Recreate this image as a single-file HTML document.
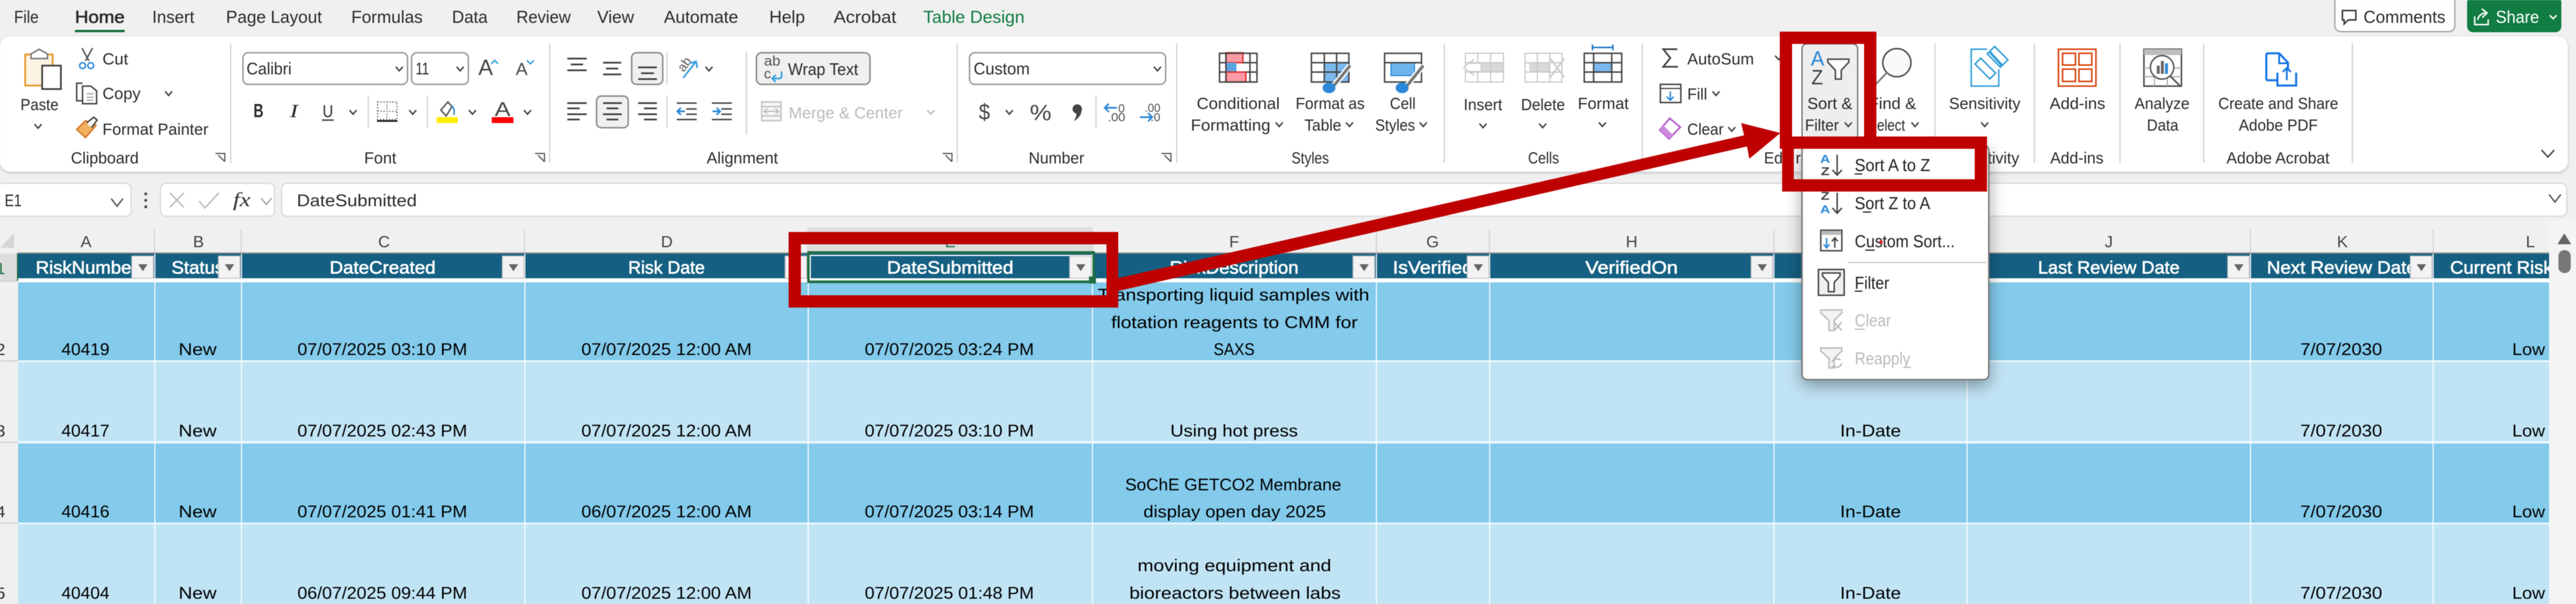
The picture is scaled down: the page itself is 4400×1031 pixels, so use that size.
<!DOCTYPE html>
<html lang="en"><head><meta charset="utf-8"><title>Excel Sort</title>
<style>
html,body{margin:0;padding:0;background:#f0f0f0;width:4400px;height:1031px;overflow:hidden}
svg{display:block;filter:blur(.6px)}
text{font-family:"Liberation Sans",sans-serif;fill:#2b2b2b;font-size:28px}
.tab{font-size:30px;fill:#2b2b2b}
.d{font-size:29px;fill:#000}
.h{font-size:31px;fill:#fff;stroke:#fff;stroke-width:.8px}
.c{font-size:28px;fill:#444;text-anchor:middle}
.g{fill:#bbb}
.m{font-size:30px;fill:#222}
.l{stroke:#444;stroke-width:3;fill:none}
.b{stroke:#2b88d8;stroke-width:3;fill:none}
.n{fill:none;stroke:#444;stroke-width:2.5}
.s{stroke:#c8c8c8;stroke-width:2;fill:none}
</style></head><body>
<svg xmlns="http://www.w3.org/2000/svg" width="4400" height="1031" viewBox="0 0 4400 1031">
<defs>
<path id="ch" d="M-6-4 0 3 6-4" fill="none" stroke="#444" stroke-width="2.5"/>
<path id="chg" d="M-6-4 0 3 6-4" fill="none" stroke="#bbb" stroke-width="2.5"/>
<path id="chb" d="M-10-6 0 7 10-6" fill="none" stroke="#555" stroke-width="2.5"/>
<g id="fb"><rect x="0" y="0" width="37" height="38" fill="#f3f3f6" stroke="#bdbdbd" stroke-width="1.5"/><path d="M11 14h16l-8 12z" fill="#666"/></g>
<filter id="sh" x="-20%" y="-20%" width="140%" height="140%"><feDropShadow dx="0" dy="10" stdDeviation="14" flood-color="#000" flood-opacity=".35"/></filter>
<filter id="rs" x="-2%" y="-10%" width="104%" height="120%"><feDropShadow dx="0" dy="2" stdDeviation="3" flood-color="#000" flood-opacity=".2"/></filter>
</defs>

<rect width="4400" height="1031" fill="#f0f0f0"/>
<!-- tabs -->
<text class="tab" x="24" y="39" textLength="42" lengthAdjust="spacingAndGlyphs">File</text>
<text class="tab" x="128" y="39" textLength="85" lengthAdjust="spacingAndGlyphs" style="stroke:#2b2b2b;stroke-width:.8px">Home</text>
<rect x="128" y="51" width="85" height="4" fill="#15703f"/>
<text class="tab" x="260" y="39" textLength="72" lengthAdjust="spacingAndGlyphs">Insert</text>
<text class="tab" x="386" y="39" textLength="164" lengthAdjust="spacingAndGlyphs">Page Layout</text>
<text class="tab" x="600" y="39" textLength="122" lengthAdjust="spacingAndGlyphs">Formulas</text>
<text class="tab" x="772" y="39" textLength="61" lengthAdjust="spacingAndGlyphs">Data</text>
<text class="tab" x="882" y="39" textLength="93" lengthAdjust="spacingAndGlyphs">Review</text>
<text class="tab" x="1020" y="39" textLength="63" lengthAdjust="spacingAndGlyphs">View</text>
<text class="tab" x="1134" y="39" textLength="127" lengthAdjust="spacingAndGlyphs">Automate</text>
<text class="tab" x="1314" y="39" textLength="61" lengthAdjust="spacingAndGlyphs">Help</text>
<text class="tab" x="1424" y="39" textLength="107" lengthAdjust="spacingAndGlyphs">Acrobat</text>
<text class="tab" x="1577" y="39" textLength="173" lengthAdjust="spacingAndGlyphs" style="fill:#107c41">Table Design</text>

<!-- comments / share -->
<rect x="3988" y="-6" width="205" height="60" rx="10" fill="#fff" stroke="#999" stroke-width="2"/>
<path d="M4001 18H4024V34H4011L4004 41V34H4001Z" fill="none" stroke="#333" stroke-width="2.5"/>
<text x="4037" y="39" textLength="140" lengthAdjust="spacingAndGlyphs" style="font-size:30px">Comments</text>
<rect x="4214" y="-6" width="161" height="61" rx="10" fill="#117c43"/>
<path d="M4227 28V42H4250V33M4232 34Q4234 24 4245 22M4239 15 4248 22 4240 30" fill="none" stroke="#fff" stroke-width="2.5"/>
<text x="4263" y="39" textLength="74" lengthAdjust="spacingAndGlyphs" style="font-size:30px;fill:#fff">Share</text>
<path d="M4355 26 4361 32 4367 26" fill="none" stroke="#fff" stroke-width="2.5"/>

<!-- ribbon -->
<rect x="0" y="62" width="4386" height="231" rx="18" fill="#fff" filter="url(#rs)"/>
<g stroke="#cfcfcf" stroke-width="2">
<path d="M394 74V278M939 74V278M1635 74V278M2010 74V278M2467 74V278M2805 74V278M3305 74V278M3475 74V278M3621 74V278M3764 74V278M4018 74V278"/>
<path d="M629 163V218M730 163V218M1139 90V145M1139 163V218M1275 88V230M1872 163V218"/>
</g>
<!-- group labels -->
<text x="121" y="279" textLength="116" lengthAdjust="spacingAndGlyphs">Clipboard</text>
<text x="622" y="279" textLength="55" lengthAdjust="spacingAndGlyphs">Font</text>
<text x="1207" y="279" textLength="122" lengthAdjust="spacingAndGlyphs">Alignment</text>
<text x="1757" y="279" textLength="95" lengthAdjust="spacingAndGlyphs">Number</text>
<text x="2206" y="279" textLength="64" lengthAdjust="spacingAndGlyphs">Styles</text>
<text x="2610" y="279" textLength="53" lengthAdjust="spacingAndGlyphs">Cells</text>
<text x="3013" y="279" textLength="32" lengthAdjust="spacingAndGlyphs">Ed</text>
<text x="3067" y="279" textLength="9" lengthAdjust="spacingAndGlyphs">r</text>
<text x="3395" y="279" textLength="54" lengthAdjust="spacingAndGlyphs">tivity</text>
<text x="3502" y="279" textLength="91" lengthAdjust="spacingAndGlyphs">Add-ins</text>
<text x="3803" y="279" textLength="176" lengthAdjust="spacingAndGlyphs">Adobe Acrobat</text>
<!-- launchers -->
<g fill="none" stroke="#555" stroke-width="2">
<path d="M383 276V262H367M372 265 383 276" transform="translate(1 0)"/>
<path d="M930 276V262H914M919 265 930 276"/>
<path d="M1626 276V262H1610M1615 265 1626 276"/>
<path d="M2000 276V262H1984M1989 265 2000 276"/>
</g>

<!-- Clipboard -->
<rect x="43" y="93" width="47" height="53" fill="#fdf3e2" stroke="#e59a2c" stroke-width="3"/>
<path d="M53 100V92L67 84 81 92V100Z" fill="#fff" stroke="#777" stroke-width="2.5"/>
<rect x="72" y="112" width="32" height="40" fill="#fff" stroke="#444" stroke-width="3"/>
<text x="35" y="188" textLength="65" lengthAdjust="spacingAndGlyphs">Paste</text>
<use href="#ch" x="65" y="216"/>
<path d="M140 82 152 104M158 82 146 104" fill="none" stroke="#555" stroke-width="2.5"/>
<circle cx="141" cy="112" r="5" fill="none" stroke="#2b88d8" stroke-width="2.5"/><circle cx="155" cy="112" r="5" fill="none" stroke="#2b88d8" stroke-width="2.5"/>
<text x="175" y="110" textLength="44" lengthAdjust="spacingAndGlyphs">Cut</text>
<path d="M141 142H131V172H141M141 177H165V155L155 147H141Z" fill="none" stroke="#444" stroke-width="2.5"/>
<path d="M148 160H160M148 166H160M148 171H160" stroke="#888" stroke-width="1.5"/>
<text x="175" y="169" textLength="65" lengthAdjust="spacingAndGlyphs">Copy</text>
<use href="#ch" x="288" y="160"/>
<path d="M131 221 146 206 164 214 146 235Z" fill="#f0b060" stroke="#d6752a" stroke-width="2.5"/>
<path d="M148 210 160 200 166 205 156 218" fill="#fff" stroke="#444" stroke-width="2.5"/>
<text x="175" y="230" textLength="181" lengthAdjust="spacingAndGlyphs">Format Painter</text>

<!-- Font -->
<rect x="415" y="90" width="281" height="54" rx="9" fill="#fff" stroke="#999" stroke-width="2.5"/>
<text x="421" y="127" textLength="77" lengthAdjust="spacingAndGlyphs" style="font-size:29px">Calibri</text>
<use href="#ch" x="682" y="118"/>
<rect x="703" y="90" width="97" height="54" rx="9" fill="#fff" stroke="#999" stroke-width="2.5"/>
<text x="710" y="127" textLength="23" lengthAdjust="spacingAndGlyphs" style="font-size:29px">11</text>
<use href="#ch" x="786" y="118"/>
<text x="817" y="128" textLength="25" lengthAdjust="spacingAndGlyphs" style="font-size:38px;fill:#444">A</text>
<path d="M839 109 845 103 851 109" fill="none" stroke="#3aa0e0" stroke-width="2.5"/>
<text x="881" y="128" textLength="20" lengthAdjust="spacingAndGlyphs" style="font-size:30px;fill:#444">A</text>
<path d="M900 103 906 109 912 103" fill="none" stroke="#3aa0e0" stroke-width="2.5"/>
<text x="433" y="200" textLength="17" lengthAdjust="spacingAndGlyphs" style="font-size:32px;font-weight:bold">B</text>
<text x="495" y="200" textLength="14" lengthAdjust="spacingAndGlyphs" style="font-size:32px;font-style:italic;font-family:'Liberation Serif',serif">I</text>
<text x="551" y="200" textLength="18" lengthAdjust="spacingAndGlyphs" style="font-size:30px">U</text>
<path d="M550 205H570" stroke="#444" stroke-width="2.5"/>
<use href="#ch" x="603" y="192"/>
<rect x="645" y="174" width="33" height="30" fill="none" stroke="#555" stroke-width="2" stroke-dasharray="2 3"/>
<path d="M661 174V204M645 190H678" stroke="#666" stroke-width="2" stroke-dasharray="2 3"/>
<rect x="644" y="205" width="35" height="3" fill="#222"/>
<use href="#ch" x="705" y="192"/>
<path d="M753 188 765 174 772 182 762 198Z" fill="none" stroke="#555" stroke-width="2.5"/>
<path d="M771 180Q778 186 775 196" fill="none" stroke="#2b88d8" stroke-width="2.5"/>
<rect x="746" y="200" width="36" height="10" fill="#ffee00"/>
<use href="#ch" x="807" y="192"/>
<text x="845" y="198" textLength="27" lengthAdjust="spacingAndGlyphs" style="font-size:34px;fill:#444">A</text>
<rect x="840" y="200" width="37" height="10" fill="#f00"/>
<use href="#ch" x="901" y="192"/>

<!-- Alignment -->
<path class="l" d="M969 100H1002M975 110H996M969 120H1002"/>
<path class="l" d="M1030 107H1061M1035 117H1056M1030 127H1061"/>
<rect x="1079" y="90" width="53" height="54" rx="8" fill="#f0f0f0" stroke="#888" stroke-width="2.5"/>
<path class="l" d="M1090 115H1122M1095 125H1117M1090 135H1122"/>
<path class="l" d="M969 176H1002M969 185H990M969 195H1002M969 204H990"/>
<rect x="1019" y="164" width="54" height="54" rx="8" fill="#f0f0f0" stroke="#888" stroke-width="2.5"/>
<path class="l" d="M1030 176H1062M1036 185H1056M1030 195H1062M1036 204H1056"/>
<path class="l" d="M1090 176H1122M1100 185H1122M1090 195H1122M1100 204H1122"/>
<text transform="rotate(-55 1168 124)" x="1168" y="124" style="font-size:22px;fill:#555">ab</text>
<path class="b" d="M1167 133 1188 106M1178 108 1189 105 1191 116" style="stroke:#3aa0e0"/>
<use href="#ch" x="1211" y="118"/>
<path class="l" d="M1156 176H1190M1172 186H1190M1172 195H1190M1156 204H1190" style="stroke-width:2.5"/>
<path class="b" d="M1158 190H1170M1163 184 1157 190 1163 196"/>
<path class="l" d="M1216 176H1250M1232 186H1250M1232 195H1250M1216 204H1250" style="stroke-width:2.5"/>
<path class="b" d="M1217 190H1229M1224 184 1230 190 1224 196"/>
<rect x="1292" y="90" width="194" height="54" rx="9" fill="#f0f0f0" stroke="#888" stroke-width="2.5"/>
<text x="1305" y="112" textLength="28" lengthAdjust="spacingAndGlyphs" style="font-size:24px;fill:#555">ab</text>
<text x="1305" y="134" style="font-size:24px;fill:#555">c</text>
<path class="b" d="M1335 122V130Q1335 134 1330 134H1320M1325 128 1319 134 1325 140" style="stroke:#3aa0e0"/>
<text x="1346" y="128" textLength="120" lengthAdjust="spacingAndGlyphs" style="font-size:29px">Wrap Text</text>
<rect x="1301" y="174" width="33" height="32" fill="#f5f5f5" stroke="#c4c4c4" stroke-width="2.5"/>
<path d="M1301 182H1334M1301 198H1334M1306 190H1329M1311 185 1305 190 1311 195M1324 185 1330 190 1324 195" fill="none" stroke="#bbb" stroke-width="2"/>
<text class="g" x="1347" y="202" textLength="195" lengthAdjust="spacingAndGlyphs" style="fill:#bbb">Merge &amp; Center</text>
<use href="#chg" x="1590" y="192"/>

<!-- Number -->
<rect x="1656" y="90" width="335" height="54" rx="9" fill="#fff" stroke="#999" stroke-width="2.5"/>
<text x="1663" y="127" textLength="96" lengthAdjust="spacingAndGlyphs" style="font-size:29px">Custom</text>
<use href="#ch" x="1977" y="118"/>
<text x="1672" y="204" textLength="19" lengthAdjust="spacingAndGlyphs" style="font-size:38px;fill:#444">$</text>
<use href="#ch" x="1724" y="192"/>
<text x="1759" y="205" textLength="37" lengthAdjust="spacingAndGlyphs" style="font-size:38px;fill:#444">%</text>
<circle cx="1840" cy="186" r="8" fill="#444"/>
<path d="M1847 186Q1849 198 1834 207Q1840 197 1838 192Z" fill="#444"/>
<text x="1910" y="192" style="font-size:20px;fill:#555">0</text>
<text x="1892" y="207" textLength="30" lengthAdjust="spacingAndGlyphs" style="font-size:20px;fill:#555">.00</text>
<path class="b" d="M1887 184H1908M1894 177 1887 184 1894 191"/>
<text x="1955" y="191" textLength="27" lengthAdjust="spacingAndGlyphs" style="font-size:20px;fill:#555">.00</text>
<text x="1965" y="207" textLength="17" lengthAdjust="spacingAndGlyphs" style="font-size:20px;fill:#555">.0</text>
<path class="b" d="M1947 200H1968M1961 193 1968 200 1961 207"/>

<!-- Conditional formatting -->
<rect x="2094" y="90" width="29" height="17" fill="#ff9aa5" stroke="#d33" stroke-width="2.5"/>
<rect x="2094" y="107" width="18" height="16" fill="#5ba6e0"/>
<rect x="2094" y="123" width="34" height="17" fill="#ff9aa5" stroke="#d33" stroke-width="2.5"/>
<path d="M2083 91H2147V140H2083ZM2083 107H2094M2123 107H2147M2083 123H2094M2128 123H2147M2094 91V140M2135 91V140" fill="none" stroke="#444" stroke-width="2.5"/>
<text x="2044" y="186" textLength="142" lengthAdjust="spacingAndGlyphs">Conditional</text>
<text x="2034" y="223" textLength="136" lengthAdjust="spacingAndGlyphs">Formatting</text>
<use href="#ch" x="2185" y="213"/>

<!-- Format as table -->
<rect x="2262" y="107" width="42" height="33" fill="#7ab8ee"/>
<path d="M2240 91H2304V140H2240ZM2240 107H2304M2240 123H2304M2262 91V140M2283 91V140" fill="none" stroke="#444" stroke-width="2.5"/>
<path d="M2306 112 2277 148" stroke="#fff" stroke-width="10"/><path d="M2306 112 2277 148" stroke="#777" stroke-width="5"/>
<ellipse cx="2270" cy="150" rx="11" ry="9" fill="#2b88d8"/>
<text x="2213" y="186" textLength="118" lengthAdjust="spacingAndGlyphs">Format as</text>
<text x="2228" y="223" textLength="63" lengthAdjust="spacingAndGlyphs">Table</text>
<use href="#ch" x="2305" y="213"/>
<rect x="2376" y="107" width="40" height="22" fill="#6fb3ee" stroke="#2b88d8" stroke-width="2"/>
<path d="M2365 91H2428V140H2365ZM2365 107H2428" fill="none" stroke="#444" stroke-width="2.5"/>
<path d="M2431 112 2402 148" stroke="#fff" stroke-width="10"/><path d="M2431 112 2402 148" stroke="#777" stroke-width="5"/>
<ellipse cx="2395" cy="150" rx="11" ry="9" fill="#2b88d8"/>
<text x="2374" y="186" textLength="44" lengthAdjust="spacingAndGlyphs">Cell</text>
<text x="2349" y="223" textLength="68" lengthAdjust="spacingAndGlyphs">Styles</text>
<use href="#ch" x="2431" y="213"/>

<!-- Cells -->
<rect x="2520" y="107" width="48" height="16" fill="#d8d8d8"/>
<path class="s" d="M2503 91H2568V140H2503ZM2503 107H2568M2503 123H2568M2524 91V140M2546 91V140"/>
<path d="M2530 108H2512L2518 101 2500 115 2518 129 2512 122H2530Z" fill="#fff" stroke="#ccc" stroke-width="2"/>
<text x="2500" y="188" textLength="66" lengthAdjust="spacingAndGlyphs">Insert</text>
<use href="#ch" x="2533" y="215"/>
<rect x="2612" y="107" width="34" height="16" fill="#d8d8d8"/>
<path class="s" d="M2605 91H2668V140H2605ZM2605 107H2668M2605 123H2668M2626 91V140M2647 91V140"/>
<path d="M2648 100 2672 132M2672 100 2648 132" stroke="#ccc" stroke-width="3" fill="none"/>
<text x="2598" y="188" textLength="75" lengthAdjust="spacingAndGlyphs">Delete</text>
<use href="#ch" x="2635" y="215"/>
<rect x="2722" y="107" width="31" height="16" fill="#7ab8ee" stroke="#1b74c4" stroke-width="2"/>
<path d="M2706 91H2770V140H2706ZM2706 107H2770M2706 123H2770M2722 91V140M2753 91V140" fill="none" stroke="#444" stroke-width="2.5"/>
<path d="M2720 81H2755M2720 76V86M2755 76V86" stroke="#1b74c4" stroke-width="2.5" fill="none"/>
<text x="2695" y="186" textLength="87" lengthAdjust="spacingAndGlyphs">Format</text>
<use href="#ch" x="2737" y="213"/>

<!-- Editing -->
<path d="M2865 84H2841L2853 99 2841 114H2866" fill="none" stroke="#444" stroke-width="3"/>
<text x="2882" y="110" textLength="114" lengthAdjust="spacingAndGlyphs">AutoSum</text>
<use href="#ch" x="3038" y="99"/>
<rect x="2836" y="144" width="35" height="31" fill="#fff" stroke="#444" stroke-width="2.5"/>
<path d="M2836 151H2871" stroke="#444" stroke-width="2"/>
<path class="b" d="M2853 156V171M2847 165 2853 171 2859 165" style="stroke-width:2.5"/>
<text x="2882" y="170" textLength="34" lengthAdjust="spacingAndGlyphs">Fill</text>
<use href="#ch" x="2931" y="160"/>
<path d="M2852 202 2870 217 2851 237 2835 222Z" fill="#fff" stroke="#b55fcb" stroke-width="3"/>
<path d="M2841 214 2858 231 2851 237 2835 222Z" fill="#cc88dd"/>
<text x="2882" y="230" textLength="62" lengthAdjust="spacingAndGlyphs">Clear</text>
<use href="#ch" x="2958" y="221"/>

<!-- Sort & Filter -->
<rect x="3078" y="75" width="95" height="170" rx="8" fill="#eee" stroke="#666" stroke-width="2"/>
<text x="3093" y="112" textLength="23" lengthAdjust="spacingAndGlyphs" style="font-size:35px;fill:#2b88d8">A</text>
<text x="3094" y="144" textLength="20" lengthAdjust="spacingAndGlyphs" style="font-size:35px;fill:#444">Z</text>
<path d="M3122 101H3158V106L3145 120V135H3135V120L3122 106Z" fill="#fff" stroke="#444" stroke-width="2.5"/>
<text x="3087" y="186" textLength="77" lengthAdjust="spacingAndGlyphs">Sort &amp;</text>
<text x="3083" y="223" textLength="58" lengthAdjust="spacingAndGlyphs">Filter</text>
<use href="#ch" x="3157" y="213"/>
<!-- Find -->
<circle cx="3240" cy="107" r="24" fill="#fafafa" stroke="#444" stroke-width="2.5"/>
<path d="M3223 124 3200 148" stroke="#777" stroke-width="3"/>
<text x="3192" y="186" textLength="81" lengthAdjust="spacingAndGlyphs">Find &amp;</text>
<text x="3191" y="223" textLength="63" lengthAdjust="spacingAndGlyphs">Select</text>
<use href="#ch" x="3271" y="213"/>

<!-- Sensitivity -->
<path d="M3394 84H3367V147H3414V118" fill="#fff" stroke="#2b9bd8" stroke-width="2.5"/>
<rect x="3373" y="110" width="36" height="14" transform="rotate(45 3391 117)" fill="#fff" stroke="#2b9bd8" stroke-width="2.5"/>
<rect x="3396" y="88" width="32" height="18" transform="rotate(45 3412 97)" fill="#fff" stroke="#2b9bd8" stroke-width="2.5"/>
<path d="M3399 89 3420 112" stroke="#2b9bd8" stroke-width="4"/>
<text x="3329" y="186" textLength="122" lengthAdjust="spacingAndGlyphs">Sensitivity</text>
<use href="#ch" x="3390" y="213"/>
<!-- Add-ins -->
<rect x="3516" y="84" width="64" height="63" fill="#fff" stroke="#d83b01" stroke-width="2.5"/>
<path d="M3523 91H3545V111H3523ZM3551 91H3573V111H3551ZM3523 118H3545V139H3523ZM3551 118H3573V139H3551Z" fill="none" stroke="#d83b01" stroke-width="2.5"/>
<text x="3501" y="186" textLength="95" lengthAdjust="spacingAndGlyphs">Add-ins</text>
<!-- Analyze -->
<rect x="3662" y="84" width="64" height="63" fill="#fff" stroke="#444" stroke-width="2.5"/>
<rect x="3662" y="84" width="64" height="10" fill="#bdbdbd"/>
<path d="M3662 116H3726M3662 131H3726M3680 131V147M3702 131V147" stroke="#aaa" stroke-width="2"/>
<circle cx="3693" cy="115" r="20" fill="#fff" stroke="#555" stroke-width="2.5"/>
<path d="M3707 130 3725 148" stroke="#555" stroke-width="3"/>
<rect x="3684" y="112" width="5" height="14" fill="#666"/><rect x="3691" y="104" width="5" height="22" fill="#666"/><rect x="3698" y="108" width="5" height="18" fill="#2b88d8"/>
<text x="3646" y="186" textLength="94" lengthAdjust="spacingAndGlyphs">Analyze</text>
<text x="3667" y="223" textLength="54" lengthAdjust="spacingAndGlyphs">Data</text>
<!-- Adobe -->
<path d="M3889 137H3874Q3871 137 3871 134V94Q3871 91 3874 91H3893L3908 107V119" fill="none" stroke="#1473e6" stroke-width="3.5"/>
<path d="M3893 91V108H3908" fill="none" stroke="#1473e6" stroke-width="3"/>
<path d="M3890 124V146H3922V124" fill="none" stroke="#1473e6" stroke-width="3.5"/>
<path d="M3906 137V117M3899 123 3906 116 3913 123" fill="none" stroke="#1473e6" stroke-width="3"/>
<text x="3789" y="186" textLength="205" lengthAdjust="spacingAndGlyphs">Create and Share</text>
<text x="3824" y="223" textLength="135" lengthAdjust="spacingAndGlyphs">Adobe PDF</text>
<path d="M4341 256 4352 268 4363 256" fill="none" stroke="#444" stroke-width="2.5"/>

<!-- formula bar -->
<g fill="#fff" stroke="#d8d8d8" stroke-width="2">
<rect x="-6" y="313" width="230" height="56" rx="9"/>
<rect x="274" y="313" width="195" height="56" rx="9"/>
<rect x="481" y="313" width="3903" height="56" rx="9"/>
</g>
<text x="8" y="352" textLength="29" lengthAdjust="spacingAndGlyphs" style="font-size:29px">E1</text>
<use href="#chb" x="200" y="345"/>
<g fill="#444"><circle cx="249" cy="331" r="2.5"/><circle cx="249" cy="342" r="2.5"/><circle cx="249" cy="353" r="2.5"/></g>
<path d="M290 329 314 354M314 329 290 354" stroke="#bbb" stroke-width="2.5"/>
<path d="M340 343 350 355 374 329" fill="none" stroke="#bbb" stroke-width="2.5"/>
<text x="398" y="352" textLength="30" lengthAdjust="spacingAndGlyphs" style="font-size:34px;font-style:italic;font-family:'Liberation Serif',serif;fill:#333">fx</text>
<path d="M446 338 455 349 464 338" fill="none" stroke="#999" stroke-width="2"/>
<text x="507" y="352" textLength="205" lengthAdjust="spacingAndGlyphs" style="font-size:29px">DateSubmitted</text>
<use href="#chb" x="4364" y="338"/>

<!-- column headers -->
<rect x="1380" y="388" width="486" height="44" fill="#dedede"/>
<path d="M264 392V433M412 392V433M896 392V433M1380 392V433M1866 392V433M2351 392V433M2544 392V433M3030 392V433M3360 392V433M3844 392V433M4156 392V433" stroke="#d4d4d4" stroke-width="2"/>
<path d="M24 398V423H0Z" fill="#d6d6d6"/>
<text class="c" x="147" y="422">A</text><text class="c" x="339" y="422">B</text><text class="c" x="656" y="422">C</text><text class="c" x="1139" y="422">D</text>
<text class="c" x="1623" y="422" style="fill:#217346">E</text><text class="c" x="2108" y="422">F</text><text class="c" x="2447" y="422">G</text><text class="c" x="2787" y="422">H</text>
<text class="c" x="3602" y="422">J</text><text class="c" x="4001" y="422">K</text><text class="c" x="4322" y="422">L</text>

<!-- row headers -->
<rect x="0" y="433" width="31" height="47" fill="#dcdcdc"/>
<rect x="29" y="432" width="2.5" height="48" fill="#217346"/>
<path d="M0 480H31M0 616H31M0 755H31M0 893H31" stroke="#cfcfcf" stroke-width="2"/>
<text x="9" y="468" text-anchor="end" style="fill:#217346">1</text>
<text x="9" y="606" text-anchor="end">2</text>
<text x="9" y="745" text-anchor="end">3</text>
<text x="9" y="883" text-anchor="end">4</text>
<text x="9" y="1022" text-anchor="end">5</text>

<!-- table -->
<rect x="31" y="431" width="4323" height="2" fill="#8a8a8a"/>
<rect x="31" y="433" width="4323" height="42" fill="#156082"/>
<rect x="31" y="475" width="4323" height="7" fill="#fff"/>
<rect x="31" y="482" width="4323" height="133" fill="#83caeb"/>
<rect x="31" y="615" width="4323" height="3" fill="#eef8fd"/>
<rect x="31" y="618" width="4323" height="135" fill="#c1e4f5"/>
<rect x="31" y="753" width="4323" height="4" fill="#eef8fd"/>
<rect x="31" y="757" width="4323" height="135" fill="#83caeb"/>
<rect x="31" y="892" width="4323" height="3" fill="#eef8fd"/>
<rect x="31" y="895" width="4323" height="136" fill="#c1e4f5"/>
<path d="M264.500 433V1031M412.500 433V1031M896.500 433V1031M1380.500 433V1031M1866 433V1031M2351 433V1031M2544.500 433V1031M3030 433V1031M3360 433V1031M3844 433V1031M4156 433V1031" stroke="#fff" stroke-width="2" opacity=".9"/>

<!-- table header text -->
<text class="h" x="61" y="467" textLength="174" lengthAdjust="spacingAndGlyphs">RiskNumber</text>
<text class="h" x="293" y="467" textLength="90" lengthAdjust="spacingAndGlyphs">Status</text>
<text class="h" x="563" y="467" textLength="181" lengthAdjust="spacingAndGlyphs">DateCreated</text>
<text class="h" x="1073" y="467" textLength="131" lengthAdjust="spacingAndGlyphs">Risk Date</text>
<text class="h" x="1515" y="467" textLength="216" lengthAdjust="spacingAndGlyphs">DateSubmitted</text>
<text class="h" x="1998" y="467" textLength="220" lengthAdjust="spacingAndGlyphs">RiskDescription</text>
<text class="h" x="2379" y="467" textLength="137" lengthAdjust="spacingAndGlyphs">IsVerified</text>
<text class="h" x="2708" y="467" textLength="158" lengthAdjust="spacingAndGlyphs">VerifiedOn</text>
<text class="h" x="3481" y="467" textLength="242" lengthAdjust="spacingAndGlyphs">Last Review Date</text>
<text class="h" x="3872" y="467" textLength="256" lengthAdjust="spacingAndGlyphs">Next Review Date</text>
<text class="h" x="4185" y="467" textLength="175" lengthAdjust="spacingAndGlyphs">Current Risk</text>
<use href="#fb" x="225" y="437"/><use href="#fb" x="373" y="437"/><use href="#fb" x="858" y="437"/><use href="#fb" x="1341" y="437"/><use href="#fb" x="2311" y="437"/><use href="#fb" x="2506" y="437"/><use href="#fb" x="2991" y="437"/><use href="#fb" x="3805" y="437"/><use href="#fb" x="4117" y="437"/>

<!-- selection -->
<rect x="1381" y="431" width="487" height="50" fill="none" stroke="#1f6e43" stroke-width="4.500"/>
<rect x="1384" y="436" width="481" height="40" fill="none" stroke="#fff" stroke-width="2"/>
<use href="#fb" x="1827" y="437"/>
<rect x="1860" y="472" width="12" height="12" fill="#1f6e43"/>

<!-- data row 2 -->
<text class="d" x="105" y="606" textLength="82" lengthAdjust="spacingAndGlyphs">40419</text>
<text class="d" x="305" y="606" textLength="65" lengthAdjust="spacingAndGlyphs">New</text>
<text class="d" x="508" y="606" textLength="290" lengthAdjust="spacingAndGlyphs">07/07/2025 03:10 PM</text>
<text class="d" x="993" y="606" textLength="291" lengthAdjust="spacingAndGlyphs">07/07/2025 12:00 AM</text>
<text class="d" x="1477" y="606" textLength="289" lengthAdjust="spacingAndGlyphs">07/07/2025 03:24 PM</text>
<text class="d" x="1875" y="513" textLength="464" lengthAdjust="spacingAndGlyphs">Transporting liquid samples with</text>
<text class="d" x="1898" y="560" textLength="421" lengthAdjust="spacingAndGlyphs">flotation reagents to CMM for</text>
<text class="d" x="2073" y="606" textLength="70" lengthAdjust="spacingAndGlyphs">SAXS</text>
<text class="d" x="3929" y="606" textLength="140" lengthAdjust="spacingAndGlyphs">7/07/2030</text>
<text class="d" x="4291" y="606" textLength="56" lengthAdjust="spacingAndGlyphs">Low</text>
<!-- row 3 -->
<text class="d" x="105" y="745" textLength="82" lengthAdjust="spacingAndGlyphs">40417</text>
<text class="d" x="305" y="745" textLength="65" lengthAdjust="spacingAndGlyphs">New</text>
<text class="d" x="508" y="745" textLength="290" lengthAdjust="spacingAndGlyphs">07/07/2025 02:43 PM</text>
<text class="d" x="993" y="745" textLength="291" lengthAdjust="spacingAndGlyphs">07/07/2025 12:00 AM</text>
<text class="d" x="1477" y="745" textLength="289" lengthAdjust="spacingAndGlyphs">07/07/2025 03:10 PM</text>
<text class="d" x="1999" y="745" textLength="218" lengthAdjust="spacingAndGlyphs">Using hot press</text>
<text class="d" x="3143" y="745" textLength="104" lengthAdjust="spacingAndGlyphs">In-Date</text>
<text class="d" x="3929" y="745" textLength="140" lengthAdjust="spacingAndGlyphs">7/07/2030</text>
<text class="d" x="4291" y="745" textLength="56" lengthAdjust="spacingAndGlyphs">Low</text>
<!-- row 4 -->
<text class="d" x="105" y="883" textLength="82" lengthAdjust="spacingAndGlyphs">40416</text>
<text class="d" x="305" y="883" textLength="65" lengthAdjust="spacingAndGlyphs">New</text>
<text class="d" x="508" y="883" textLength="290" lengthAdjust="spacingAndGlyphs">07/07/2025 01:41 PM</text>
<text class="d" x="993" y="883" textLength="291" lengthAdjust="spacingAndGlyphs">06/07/2025 12:00 AM</text>
<text class="d" x="1477" y="883" textLength="289" lengthAdjust="spacingAndGlyphs">07/07/2025 03:14 PM</text>
<text class="d" x="1922" y="837" textLength="369" lengthAdjust="spacingAndGlyphs">SoChE GETCO2 Membrane</text>
<text class="d" x="1953" y="883" textLength="312" lengthAdjust="spacingAndGlyphs">display open day 2025</text>
<text class="d" x="3143" y="883" textLength="104" lengthAdjust="spacingAndGlyphs">In-Date</text>
<text class="d" x="3929" y="883" textLength="140" lengthAdjust="spacingAndGlyphs">7/07/2030</text>
<text class="d" x="4291" y="883" textLength="56" lengthAdjust="spacingAndGlyphs">Low</text>
<!-- row 5 -->
<text class="d" x="105" y="1022" textLength="82" lengthAdjust="spacingAndGlyphs">40404</text>
<text class="d" x="305" y="1022" textLength="65" lengthAdjust="spacingAndGlyphs">New</text>
<text class="d" x="508" y="1022" textLength="290" lengthAdjust="spacingAndGlyphs">06/07/2025 09:44 PM</text>
<text class="d" x="993" y="1022" textLength="291" lengthAdjust="spacingAndGlyphs">07/07/2025 12:00 AM</text>
<text class="d" x="1477" y="1022" textLength="289" lengthAdjust="spacingAndGlyphs">07/07/2025 01:48 PM</text>
<text class="d" x="1943" y="975" textLength="331" lengthAdjust="spacingAndGlyphs">moving equipment and</text>
<text class="d" x="1929" y="1022" textLength="361" lengthAdjust="spacingAndGlyphs">bioreactors between labs</text>
<text class="d" x="3143" y="1022" textLength="104" lengthAdjust="spacingAndGlyphs">In-Date</text>
<text class="d" x="3929" y="1022" textLength="140" lengthAdjust="spacingAndGlyphs">7/07/2030</text>
<text class="d" x="4291" y="1022" textLength="56" lengthAdjust="spacingAndGlyphs">Low</text>

<!-- scrollbar -->
<rect x="4354" y="376" width="46" height="655" fill="#f4f4f4"/>
<path d="M4380 400 4390 416H4370Z" fill="#666" stroke="#666" stroke-width="2" stroke-linejoin="round"/>
<rect x="4370" y="427" width="21" height="39" rx="10" fill="#777"/>

<!-- menu -->
<rect x="3078" y="248" width="319" height="400" rx="9" fill="#fff" stroke="#777" stroke-width="2.5" filter="url(#sh)"/>
<text x="3109" y="278" textLength="17" lengthAdjust="spacingAndGlyphs" style="font-size:19px;font-weight:bold;fill:#2b88d8">A</text>
<text x="3110" y="299" textLength="15" lengthAdjust="spacingAndGlyphs" style="font-size:19px;font-weight:bold;fill:#444">Z</text>
<path d="M3138 264V298M3130 290 3138 299 3146 290" class="l" style="stroke-width:2.5"/>
<text class="m" x="3168" y="292" textLength="129" lengthAdjust="spacingAndGlyphs">Sort A to Z</text>
<path d="M3168 297H3181" stroke="#222" stroke-width="2"/>
<text x="3110" y="341" textLength="15" lengthAdjust="spacingAndGlyphs" style="font-size:19px;font-weight:bold;fill:#444">Z</text>
<text x="3109" y="364" textLength="17" lengthAdjust="spacingAndGlyphs" style="font-size:19px;font-weight:bold;fill:#2b88d8">A</text>
<path d="M3138 329V363M3130 355 3138 364 3146 355" class="l" style="stroke-width:2.5"/>
<text class="m" x="3168" y="357" textLength="129" lengthAdjust="spacingAndGlyphs">Sort Z to A</text>
<path d="M3182 362H3196" stroke="#222" stroke-width="2"/>
<rect x="3110" y="393" width="36" height="35" fill="#fff" stroke="#444" stroke-width="2.5"/>
<rect x="3111" y="394" width="34" height="7" fill="#bbb"/>
<path d="M3120 406V422M3115 417 3120 423 3125 417" class="b" style="stroke-width:2.5"/>
<path d="M3134 423V407M3129 412 3134 406 3139 412" class="l" style="stroke-width:2.5"/>
<text class="m" x="3168" y="422" textLength="171" lengthAdjust="spacingAndGlyphs">Custom Sort...</text>
<path d="M3186 427H3202" stroke="#222" stroke-width="2"/>
<circle cx="3213" cy="413" r="3" fill="#e02020"/>
<path d="M3156 448H3393" stroke="#ccc" stroke-width="2"/>
<rect x="3106" y="460" width="44" height="44" fill="#efefef" stroke="#444" stroke-width="2.5"/>
<path d="M3113 466H3143V471L3133 482V498H3123V482L3113 471Z" fill="#fff" stroke="#444" stroke-width="2.5"/>
<text class="m" x="3168" y="493" textLength="59" lengthAdjust="spacingAndGlyphs">Filter</text>
<path d="M3168 497H3181" stroke="#222" stroke-width="2"/>
<path d="M3110 529H3146V534L3133 547V564H3124V547L3110 534Z" fill="#f3f3f3" stroke="#bbb" stroke-width="2.5"/>
<path d="M3133 550 3146 564M3146 550 3133 564" stroke="#bbb" stroke-width="2.5"/>
<text class="m g" x="3168" y="557" textLength="62" lengthAdjust="spacingAndGlyphs" style="fill:#bbb">Clear</text>
<path d="M3168 562H3185" stroke="#bbb" stroke-width="2"/>
<path d="M3110 594H3146V599L3133 612V628H3124V612L3110 599Z" fill="#f3f3f3" stroke="#bbb" stroke-width="2.5"/>
<path d="M3129 618Q3133 610 3144 614M3146 620Q3143 630 3129 625" fill="none" stroke="#bbb" stroke-width="2.5"/>
<text class="m g" x="3168" y="622" textLength="95" lengthAdjust="spacingAndGlyphs" style="fill:#bbb">Reapply</text>
<path d="M3253 627H3264" stroke="#bbb" stroke-width="2"/>

<!-- red annotations -->
<g fill="#bf0000">
<path fill-rule="evenodd" d="M1347 396H1910V525H1347ZM1368 417V504H1890V417Z"/>
<path fill-rule="evenodd" d="M3040 54H3205V254H3040ZM3061 75V233H3184V75Z"/>
<path fill-rule="evenodd" d="M3044 233H3394V327H3044ZM3064 254V306H3373V254Z"/>
<path d="M1900 477 2979 231 2974 210 3041 227 2988 271 2984 250 1900 499Z"/>
</g>
</svg>
</body></html>
